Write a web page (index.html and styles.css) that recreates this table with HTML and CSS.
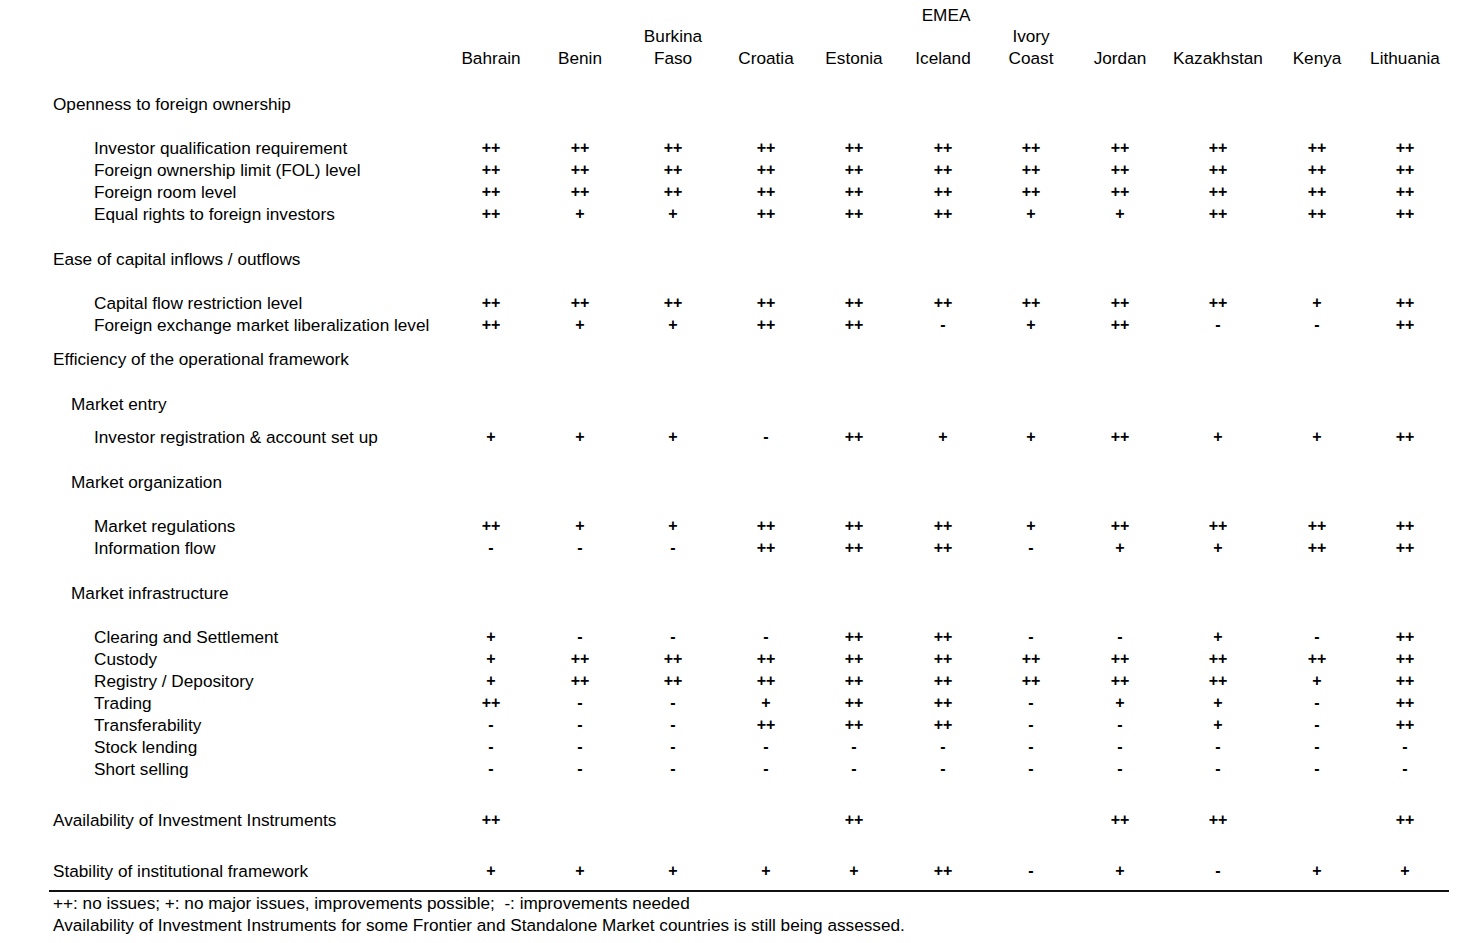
FILE: index.html
```html
<!DOCTYPE html>
<html>
<head>
<meta charset="utf-8">
<link rel="stylesheet" href="styles.css">
</head>
<body>
<div class="sheet">
  <div class="region grid"><span></span><span class="region-name">EMEA</span></div>
  <div class="head grid">
    <span></span>
    <span>Bahrain</span><span>Benin</span><span>Burkina<br>Faso</span><span>Croatia</span><span>Estonia</span><span>Iceland</span><span>Ivory<br>Coast</span><span>Jordan</span><span>Kazakhstan</span><span>Kenya</span><span>Lithuania</span>
  </div>
  <div class="gap g24"></div>

  <div class="row grid"><span class="l1">Openness to foreign ownership</span></div>
  <div class="gap g22"></div>
  <div class="row grid"><span class="l3">Investor qualification requirement</span><span>++</span><span>++</span><span>++</span><span>++</span><span>++</span><span>++</span><span>++</span><span>++</span><span>++</span><span>++</span><span>++</span></div>
  <div class="row grid"><span class="l3">Foreign ownership limit (FOL) level</span><span>++</span><span>++</span><span>++</span><span>++</span><span>++</span><span>++</span><span>++</span><span>++</span><span>++</span><span>++</span><span>++</span></div>
  <div class="row grid"><span class="l3">Foreign room level</span><span>++</span><span>++</span><span>++</span><span>++</span><span>++</span><span>++</span><span>++</span><span>++</span><span>++</span><span>++</span><span>++</span></div>
  <div class="row grid"><span class="l3">Equal rights to foreign investors</span><span>++</span><span>+</span><span>+</span><span>++</span><span>++</span><span>++</span><span>+</span><span>+</span><span>++</span><span>++</span><span>++</span></div>
  <div class="gap g23"></div>

  <div class="row grid"><span class="l1">Ease of capital inflows / outflows</span></div>
  <div class="gap g22"></div>
  <div class="row grid"><span class="l3">Capital flow restriction level</span><span>++</span><span>++</span><span>++</span><span>++</span><span>++</span><span>++</span><span>++</span><span>++</span><span>++</span><span>+</span><span>++</span></div>
  <div class="row grid"><span class="l3">Foreign exchange market liberalization level</span><span>++</span><span>+</span><span>+</span><span>++</span><span>++</span><span>-</span><span>+</span><span>++</span><span>-</span><span>-</span><span>++</span></div>
  <div class="gap g12"></div>

  <div class="row grid"><span class="l1">Efficiency of the operational framework</span></div>
  <div class="gap g23"></div>
  <div class="row grid"><span class="l2">Market entry</span></div>
  <div class="gap g11"></div>
  <div class="row grid"><span class="l3">Investor registration &amp; account set up</span><span>+</span><span>+</span><span>+</span><span>-</span><span>++</span><span>+</span><span>+</span><span>++</span><span>+</span><span>+</span><span>++</span></div>
  <div class="gap g23"></div>
  <div class="row grid"><span class="l2">Market organization</span></div>
  <div class="gap g22"></div>
  <div class="row grid"><span class="l3">Market regulations</span><span>++</span><span>+</span><span>+</span><span>++</span><span>++</span><span>++</span><span>+</span><span>++</span><span>++</span><span>++</span><span>++</span></div>
  <div class="row grid"><span class="l3">Information flow</span><span>-</span><span>-</span><span>-</span><span>++</span><span>++</span><span>++</span><span>-</span><span>+</span><span>+</span><span>++</span><span>++</span></div>
  <div class="gap g23"></div>
  <div class="row grid"><span class="l2">Market infrastructure</span></div>
  <div class="gap g22"></div>
  <div class="row grid"><span class="l3">Clearing and Settlement</span><span>+</span><span>-</span><span>-</span><span>-</span><span>++</span><span>++</span><span>-</span><span>-</span><span>+</span><span>-</span><span>++</span></div>
  <div class="row grid"><span class="l3">Custody</span><span>+</span><span>++</span><span>++</span><span>++</span><span>++</span><span>++</span><span>++</span><span>++</span><span>++</span><span>++</span><span>++</span></div>
  <div class="row grid"><span class="l3">Registry / Depository</span><span>+</span><span>++</span><span>++</span><span>++</span><span>++</span><span>++</span><span>++</span><span>++</span><span>++</span><span>+</span><span>++</span></div>
  <div class="row grid"><span class="l3">Trading</span><span>++</span><span>-</span><span>-</span><span>+</span><span>++</span><span>++</span><span>-</span><span>+</span><span>+</span><span>-</span><span>++</span></div>
  <div class="row grid"><span class="l3">Transferability</span><span>-</span><span>-</span><span>-</span><span>++</span><span>++</span><span>++</span><span>-</span><span>-</span><span>+</span><span>-</span><span>++</span></div>
  <div class="row grid"><span class="l3">Stock lending</span><span>-</span><span>-</span><span>-</span><span>-</span><span>-</span><span>-</span><span>-</span><span>-</span><span>-</span><span>-</span><span>-</span></div>
  <div class="row grid"><span class="l3">Short selling</span><span>-</span><span>-</span><span>-</span><span>-</span><span>-</span><span>-</span><span>-</span><span>-</span><span>-</span><span>-</span><span>-</span></div>
  <div class="gap g29"></div>

  <div class="row grid"><span class="l1">Availability of Investment Instruments</span><span>++</span><span></span><span></span><span></span><span>++</span><span></span><span></span><span>++</span><span>++</span><span></span><span>++</span></div>
  <div class="gap g29"></div>
  <div class="row grid"><span class="l1">Stability of institutional framework</span><span>+</span><span>+</span><span>+</span><span>+</span><span>+</span><span>++</span><span>-</span><span>+</span><span>-</span><span>+</span><span>+</span></div>
  <div class="gap g8"></div>

  <div class="notes">
    <p>++: no issues; +: no major issues, improvements possible;&nbsp; -: improvements needed</p>
    <p>Availability of Investment Instruments for some Frontier and Standalone Market countries is still being assessed.</p>
  </div>
</div>
</body>
</html>
```

FILE: styles.css
```css
html, body {
  margin: 0;
  padding: 0;
  background: #ffffff;
}

body {
  font-family: "Liberation Sans", Arial, Helvetica, sans-serif;
  font-size: 17.2px;
  color: #000000;
}

.sheet {
  margin-left: 49px;
  padding-top: 4px;
  width: 1400px;
}

.grid {
  display: grid;
  grid-template-columns: 398px 88px 90px 96px 90px 86px 92px 84px 94px 102px 96px 80px;
}

.grid > span {
  text-align: center;
  white-space: nowrap;
}

.row > span:not(.l1):not(.l2):not(.l3) {
  font-size: 16px;
  font-weight: 700;
}

.region {
  height: 22px;
  line-height: 22px;
}

.region-name {
  grid-column: 2 / 13;
}

.head {
  height: 43px;
  line-height: 21.5px;
  align-items: end;
}

.row {
  height: 22px;
  line-height: 22px;
}

.grid > .l1,
.grid > .l2,
.grid > .l3 {
  text-align: left;
}

.l1 { padding-left: 4px; }
.l2 { padding-left: 22px; }
.l3 { padding-left: 45px; }

.gap { width: 100%; }
.g8 { height: 8px; }
.g11 { height: 11px; }
.g12 { height: 12px; }
.g22 { height: 22px; }
.g23 { height: 23px; }
.g24 { height: 24px; }
.g29 { height: 29px; }

.notes {
  border-top: 2px solid #111111;
  padding-left: 4px;
}

.notes p {
  margin: 0;
  height: 22px;
  line-height: 22px;
}
```
